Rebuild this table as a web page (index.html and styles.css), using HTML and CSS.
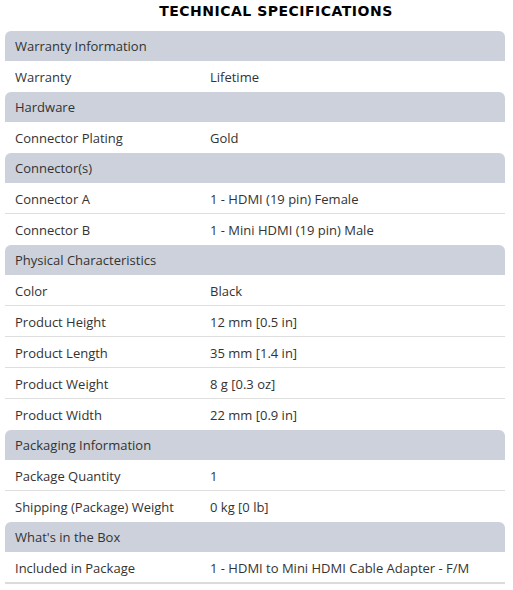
FILE: index.html
```html
<!DOCTYPE html>
<html>
<head>
<meta charset="utf-8">
<link rel="stylesheet" href="styles.css">
</head>
<body>
<div class="specs">
  <h2 class="title">TECHNICAL SPECIFICATIONS</h2>
  <div class="group">
    <div class="head">Warranty Information</div>
    <div class="row"><span class="label">Warranty</span><span class="value">Lifetime</span></div>
  </div>
  <div class="group">
    <div class="head">Hardware</div>
    <div class="row"><span class="label">Connector Plating</span><span class="value">Gold</span></div>
  </div>
  <div class="group">
    <div class="head">Connector(s)</div>
    <div class="row"><span class="label">Connector A</span><span class="value">1 - HDMI (19 pin) Female</span></div>
    <div class="row"><span class="label">Connector B</span><span class="value">1 - Mini HDMI (19 pin) Male</span></div>
  </div>
  <div class="group">
    <div class="head">Physical Characteristics</div>
    <div class="row"><span class="label">Color</span><span class="value">Black</span></div>
    <div class="row"><span class="label">Product Height</span><span class="value">12 mm [0.5 in]</span></div>
    <div class="row"><span class="label">Product Length</span><span class="value">35 mm [1.4 in]</span></div>
    <div class="row"><span class="label">Product Weight</span><span class="value">8 g [0.3 oz]</span></div>
    <div class="row"><span class="label">Product Width</span><span class="value">22 mm [0.9 in]</span></div>
  </div>
  <div class="group">
    <div class="head">Packaging Information</div>
    <div class="row"><span class="label">Package Quantity</span><span class="value">1</span></div>
    <div class="row"><span class="label">Shipping (Package) Weight</span><span class="value">0 kg [0 lb]</span></div>
  </div>
  <div class="group last">
    <div class="head">What's in the Box</div>
    <div class="row"><span class="label">Included in Package</span><span class="value">1 - HDMI to Mini HDMI Cable Adapter - F/M</span></div>
  </div>
</div>
</body>
</html>
```
FILE: styles.css
```css
html, body {
  margin: 0;
  padding: 0;
  background: #ffffff;
}
.specs {
  padding: 0 8px 0 5px;
  font-family: "Open Sans", "Liberation Sans", sans-serif;
  font-size: 13px;
  color: #333333;
}
.title {
  margin: 0;
  height: 31px;
  box-sizing: border-box;
  padding: 3px 0 0 42px;
  line-height: 16px;
  text-align: center;
  font-family: "DejaVu Sans", Verdana, sans-serif;
  font-weight: bold;
  font-size: 14px;
  letter-spacing: 0.5px;
  color: #000000;
}
.head {
  height: 30px;
  line-height: 30px;
  padding-left: 10px;
  background: #ccd1db;
  border-radius: 6px 6px 0 0;
}
.row {
  display: flex;
  height: 29px;
  padding-top: 1px;
  line-height: 30px;
  border-bottom: 1px solid #dedede;
  padding-left: 10px;
}
.row:last-child {
  border-bottom-color: #ffffff;
}
.group.last .row:last-child {
  border-bottom: 2px solid #dcdcdc;
}
.label {
  width: 195px;
  flex: none;
}
.value {
  flex: 1;
}
```
